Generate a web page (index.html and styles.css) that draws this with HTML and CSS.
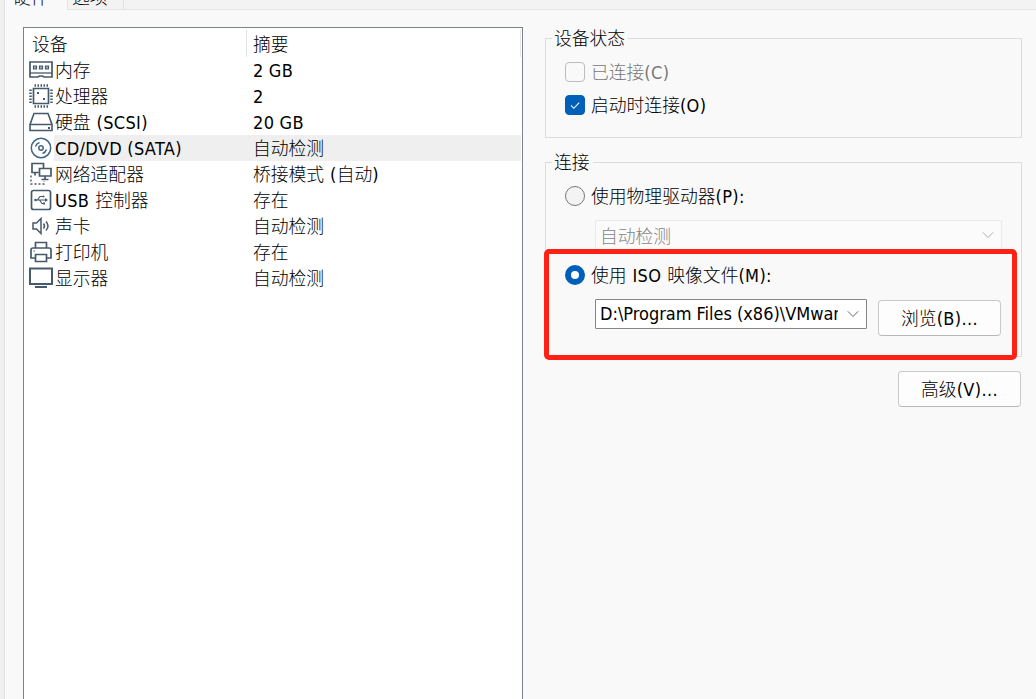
FILE: index.html
```html
<!DOCTYPE html>
<html lang="zh-CN">
<head>
<meta charset="utf-8">
<title>虚拟机设置</title>
<link rel="stylesheet" href="styles.css">
</head>
<body>
<div class="window">
  <nav class="tabs"><div class="tab active"><span>硬件</span></div><div class="tab"><span>选项</span></div></nav>
  <main class="content">
    <section class="devices">
      <div class="head"><span class="name">设备</span><span class="summary">摘要</span></div>
      <div class="row"><svg class="icon" viewBox="0 0 24 24"><path d="M1 4h22v15h-8l-1.500-1h-3L9 19H1z"/><path d="M1 15h22" stroke-width="1.300"/><path d="M4.500 8h3v3h-3zM10.500 8h3v3h-3zM16.500 8h3v3h-3z" fill="#a9b4bd" stroke-width="1.200"/></svg><span class="name">内存</span><span class="summary l">2 GB</span></div>
      <div class="row"><svg class="icon" viewBox="0 0 24 24"><path d="M4.500 4.500h15v15h-15z"/><path d="M5.500 1.500h14M5.500 22.500h14M1.500 5.500v14M22.500 5.500v14" stroke-width="2.500" stroke-dasharray="1.500 1.500"/><path d="M8 8h2v2H8zM14 14h2v2h-2z" class="solid"/></svg><span class="name">处理器</span><span class="summary l">2</span></div>
      <div class="row"><svg class="icon" viewBox="0 0 24 24"><path d="M5 3.500h14l4 11v6H1v-6zM1 14.500h22" stroke-width="1.600"/><path d="M19 17h2v2h-2z" class="solid"/></svg><span class="name">硬盘 <span class="l">(SCSI)</span></span><span class="summary l">20 GB</span></div>
      <div class="row selected"><svg class="icon disc" viewBox="0 0 24 24"><circle cx="12" cy="12" r="9.700"/><circle cx="12" cy="12" r="2.200"/><path d="M6.500 10.500a6 6 0 0 1 4-4M17.500 13.500a6 6 0 0 1-4 4"/></svg><span class="name l">CD/DVD (SATA)</span><span class="summary">自动检测</span></div>
      <div class="row"><svg class="icon" viewBox="0 0 24 24"><path d="M9.500 10.500H3V1.500h11.500V6M6 11v2.500M10.500 6.500h11.500V14H10.500zM16 14v3M12.500 17.500h7"/><path d="M2 13.500V22h13v-3" stroke-dasharray="2 2" stroke-width="1.400"/></svg><span class="name">网络适配器</span><span class="summary">桥接模式 <span class="l">(</span>自动<span class="l">)</span></span></div>
      <div class="row"><svg class="icon" viewBox="0 0 24 24"><rect x="2.500" y="2.500" width="19" height="19" rx="2"/><path d="M6 12h11M8.500 12l2.500-3.500h3M10.500 12l2.500 3.500h2" stroke-width="1.200"/><path d="M16 10l3 2-3 2zM14 14.500h2v2h-2z" class="solid"/><circle cx="6.500" cy="12" r="1.300" class="solid"/><circle cx="14.500" cy="8.500" r="1" class="solid"/></svg><span class="name"><span class="l">USB</span> 控制器</span><span class="summary">存在</span></div>
      <div class="row"><svg class="icon" viewBox="0 0 24 24"><path d="M4 9h3.500L12 4.500v15L7.500 15H4zM14.500 9.500q2 2.500 0 5M17 7.500q4 4.500 0 9" stroke-width="1.500"/></svg><span class="name">声卡</span><span class="summary">自动检测</span></div>
      <div class="row"><svg class="icon" viewBox="0 0 24 24"><path d="M6.500 8V2.500h11V8M6 18H2V10q0-2 2-2h16q2 0 2 2v8h-4M6.500 14.500h11v7h-11z"/><path d="M4.500 11h1.500" stroke-width="1.200"/></svg><span class="name">打印机</span><span class="summary">存在</span></div>
      <div class="row"><svg class="icon" viewBox="0 0 24 24"><path d="M1 2.500h22v15.500H1z" stroke-width="2"/><path d="M6 21h12" stroke-width="2"/></svg><span class="name">显示器</span><span class="summary">自动检测</span></div>
    </section>
    <section class="settings">
      <fieldset class="status">
        <legend>设备状态</legend>
        <div class="option disabled"><span class="check"></span><span>已连接<span class="l">(C)</span></span></div>
        <div class="option"><span class="check on"><svg viewBox="0 0 20 20"><path d="M5.500 10.500l3.200 3.200 6-6.400"/></svg></span><span>启动时连接<span class="l">(O)</span></span></div>
      </fieldset>
      <fieldset class="connection">
        <legend>连接</legend>
        <div class="option"><span class="radio"></span><span>使用物理驱动器<span class="l">(P):</span></span></div>
        <div class="combo inactive"><span>自动检测</span><svg class="chevron" viewBox="0 0 12 8"><path d="M.8 1.300L6 6.500l5.200-5.200"/></svg></div>
        <div class="option iso"><span class="radio on"></span><span>使用 <span class="l">ISO</span> 映像文件<span class="l">(M):</span></span></div>
        <div class="file">
          <div class="combo"><span class="path l">D:\Program Files (x86)\VMware</span><svg class="chevron" viewBox="0 0 12 8"><path d="M.8 1.300L6 6.500l5.200-5.200"/></svg></div>
          <button>浏览<span class="l">(B)...</span></button>
        </div>
        <div class="highlight"></div>
      </fieldset>
      <button class="advanced">高级<span class="l">(V)...</span></button>
    </section>
  </main>
</div>
</body>
</html>
```
FILE: styles.css
```css
* { box-sizing: border-box; }
body { margin: 0; background: #f0f0f0; overflow: hidden; font: 300 17.8px/26px "Noto Sans CJK SC", sans-serif; word-spacing: 2px; color: #000; }
.l { font-family: "DejaVu Sans Condensed", "DejaVu Sans", sans-serif; font-stretch: condensed; font-weight: 400; font-size: 18px; letter-spacing: .35px; word-spacing: -.3px; }
.window { height: 699px; margin-left: 4px; border-left: 1px solid #e2e2e2; background: #f9f9f9; display: flex; flex-direction: column; }
.tabs { height: 10px; display: flex; background: linear-gradient(#f3f3f3 9px, #e5e5e5 9px); }
.tab { width: 56px; height: 10px; overflow: hidden; border-right: 1px solid #e5e5e5; padding-left: 4px; display: flex; align-items: flex-end; }
.tab span { line-height: 26px; margin-bottom: 1px; }
.tab.active { width: 63px; padding-left: 8px; background: #f9f9f9; }
.content { flex: 1; display: flex; gap: 22px; padding: 17px 14px 0 18px; }
.devices { flex: none; width: 500px; height: 680px; border: 1px solid #7c828b; background: #fff; padding: 2px 1px 0; }
.head, .row { height: 26px; display: flex; align-items: center; white-space: nowrap; }
.head { height: 27px; align-items: stretch; border-right: 1px solid #e5e5e5; }
.head .name { width: 222px; padding-left: 7px; border-right: 1px solid #e0e0e0; }
.head .summary { padding-left: 6px; }
.row { padding-left: 4px; }
.row .name { width: 198px; height: 26px; padding-left: 1px; line-height: 25px; }
.row .summary { flex: 1; height: 26px; padding-left: 1px; line-height: 25px; }
.row .name.l, .row .summary.l { line-height: 27px; }
.selected .name, .selected .summary { background: #efefef; }
.icon { width: 24px; height: 24px; flex: none; margin-right: 1px; fill: none; stroke: #465a69; stroke-width: 1.7; }
.icon .solid { fill: #465a69; stroke: none; }
.disc { stroke: #426783; stroke-width: 1.5; }
.settings { flex: none; width: 477px; display: flex; flex-direction: column; }
fieldset { position: relative; margin: 0; border: 1px solid #dcdcdc; padding: 0 19px; min-width: 0; }
legend { margin-left: -13px; padding: 0 3px 0 2px; height: 26px; line-height: 25px; }
.status { height: 113px; margin-top: -2px; }
.connection { height: 208px; margin-top: 11px; }
.option { display: flex; align-items: center; gap: 6px; height: 26px; white-space: nowrap; }
.status .option { margin-top: 7px; }
.status .option.disabled { color: #777; }
.status legend + .option { margin-top: 8px; }
.check, .radio { width: 20px; height: 20px; flex: none; border: 1px solid #bcbcbc; border-radius: 4px; }
.check.on { background: #005fb8; border-color: #005fb8; display: flex; }
.check svg { width: 18px; height: 18px; fill: none; stroke: #fff; stroke-width: 1.2; }
.radio { border: 1px solid #777; border-radius: 50%; background: #f3f3f3; }
.radio.on { border: 6px solid #005fb8; background: #fff; }
.connection legend + .option { margin-top: 8px; }
.combo { height: 30px; border: 1px solid #858585; border-radius: 1px; background: #fff; display: flex; align-items: center; justify-content: space-between; padding: 0 7px 0 4px; }
.combo.inactive { margin: 11px 0 0 30px; background: #fbfbfb; border-color: #e9e9e9; color: #858585; }
.chevron { width: 12px; height: 8px; fill: none; stroke: #666; stroke-width: 1; flex: none; }
.inactive .chevron { stroke: #aaa; }
.option.iso { margin-top: 12px; }
.file { display: flex; gap: 11px; margin: 11px 0 0 30px; }
.file .combo { width: 272px; }
.path { width: 238px; overflow: hidden; white-space: nowrap; letter-spacing: -.02px; word-spacing: 0; }
button { width: 123px; height: 36px; border: 1px solid #c9c9c9; border-bottom-color: #b8b8b8; border-radius: 4px; background: #fdfdfd; font: inherit; color: #000; padding: 0; flex: none; }
.file button { margin-top: 1px; }
.advanced { align-self: flex-end; margin-top: 14px; margin-right: 1px; }
.highlight { position: absolute; left: -2px; top: 74px; width: 473px; height: 111px; border: 5px solid #ff2114; border-radius: 5px; }
```
